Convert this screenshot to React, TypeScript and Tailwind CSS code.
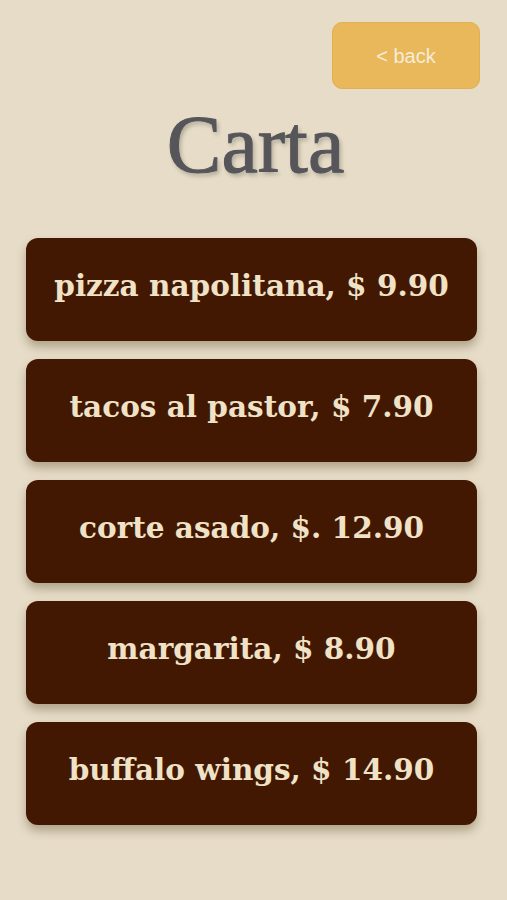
import React from "react";

const items = [
  "pizza napolitana, $ 9.90",
  "tacos al pastor, $ 7.90",
  "corte asado, $. 12.90",
  "margarita, $ 8.90",
  "buffalo wings, $ 14.90",
];

export default function App() {
  return (
    <div className="min-h-[900px] w-full bg-[#e6dcc7] pl-[26px] pr-[30px] pt-[22px]">
      <div className="flex justify-end">
        <button className="mr-[-3px] flex h-[67px] w-[148px] items-center justify-center rounded-[10px] border border-[#e2b04f] bg-[#e8b85a] text-[20px] text-[#f6ecd8] [font-family:'Liberation_Sans',Arial,sans-serif]">
          &lt; back
        </button>
      </div>
      <h1 className="mt-[12px] pl-[8px] text-center text-[82px] leading-[88px] text-[#56565a] [font-family:'Liberation_Serif',serif] [-webkit-text-stroke:1px_#56565a] [text-shadow:2px_3px_4px_rgba(0,0,0,0.25)]">
        Carta
      </h1>
      <div className="mt-[49px] flex flex-col gap-[18px]">
        {items.map((t) => (
          <div
            key={t}
            className="flex h-[103px] items-center justify-center rounded-[12px] bg-[#431803] pb-[6px] shadow-[0_6px_10px_rgba(80,60,30,0.35)]"
          >
            <span className="text-[29.5px] font-bold text-[#efe2c6] [font-family:'DejaVu_Serif',serif]">
              {t}
            </span>
          </div>
        ))}
      </div>
    </div>
  );
}
